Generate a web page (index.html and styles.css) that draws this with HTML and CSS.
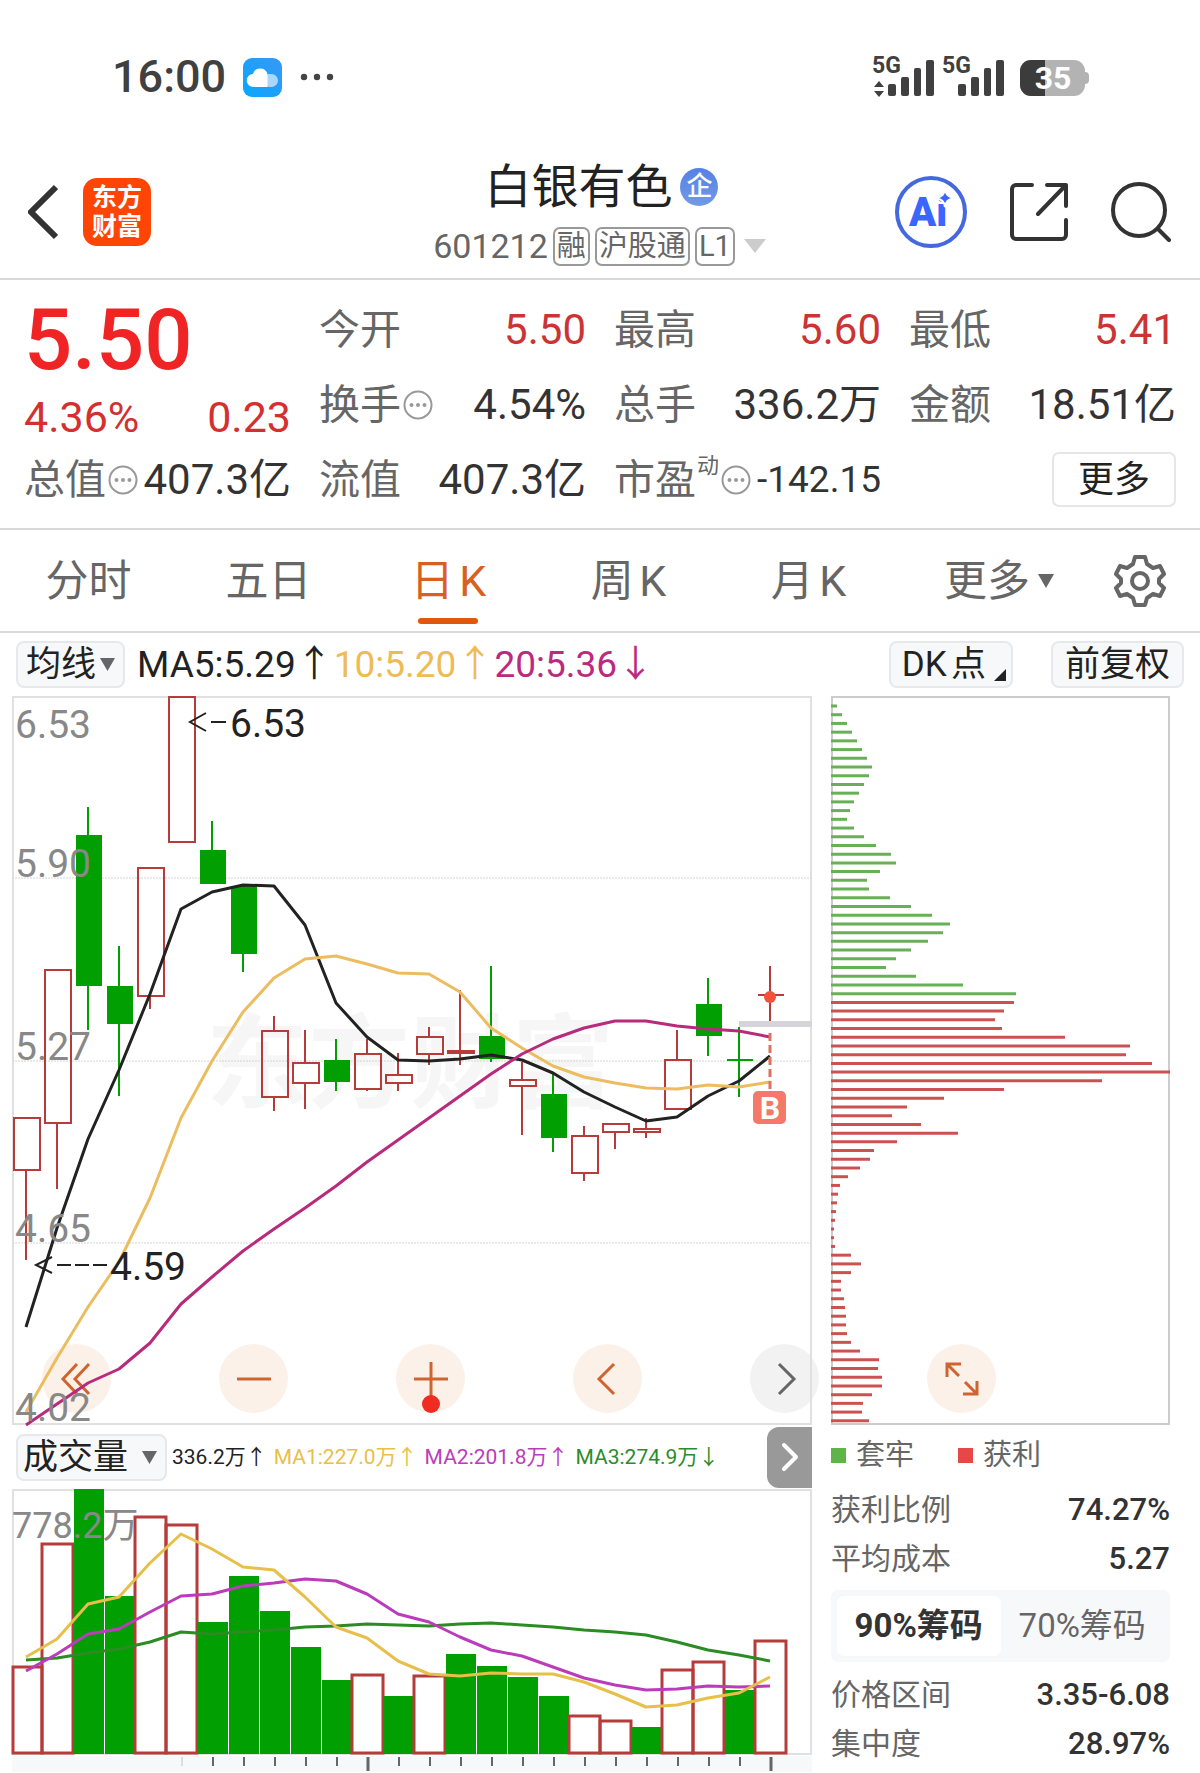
FILE: index.html
```html
<!DOCTYPE html>
<html lang="zh-CN">
<head>
<meta charset="utf-8">
<meta name="viewport" content="width=device-width, initial-scale=1">
<title>白银有色 601212</title>
<link rel="stylesheet" href="styles.css">
</head>
<body>
<div class="status">
  <div class="status-left">
    <span class="clock">16:00</span>
    <svg class="cloud" viewBox="0 0 39 39" aria-hidden="true">
      <defs>
        <linearGradient id="sky" x1="0" y1="1" x2="1" y2="0"><stop offset="0" stop-color="#06a8ff"/><stop offset="1" stop-color="#3a97f5"/></linearGradient>
      </defs>
      <rect width="39" height="39" rx="9" fill="url(#sky)"/>
      <rect x="20" y="16" width="15" height="13" rx="6.5" fill="#a9d8fb"/>
      <path d="M10.500 29a6.500 6.500 0 0 1-.5-13 7.500 7.500 0 0 1 14.500 0V29z" fill="#fff"/>
    </svg>
    <svg class="dots" viewBox="0 0 34 8" aria-hidden="true"><g fill="#444"><circle cx="4" cy="4" r="3.200"/><circle cx="17" cy="4" r="3.200"/><circle cx="30" cy="4" r="3.200"/></g></svg>
  </div>
  <svg class="signals" viewBox="-4 -7 222 56" role="img" aria-label="5G 5G 35">
    <g fill="#404040">
      <text x="0" y="17" class="sig-text">5G</text>
      <path d="M7 25l5 6H2zM7 41l5-6H2z"/>
      <rect x="16" y="28" width="8" height="12" rx="2"/><rect x="29" y="21" width="8" height="19" rx="2"/><rect x="42" y="12" width="7" height="28" rx="2"/><rect x="54" y="4" width="8" height="36" rx="2"/>
      <text x="70" y="17" class="sig-text">5G</text>
      <rect x="86" y="28" width="8" height="12" rx="2"/><rect x="99" y="21" width="8" height="19" rx="2"/><rect x="112" y="12" width="7" height="28" rx="2"/><rect x="124" y="4" width="8" height="36" rx="2"/>
    </g>
    <rect x="148" y="4" width="65" height="36" rx="11" fill="#b3b3b3"/>
    <path d="M212 16h1a4 4 0 0 1 4 4v4a4 4 0 0 1-4 4h-1z" fill="#b3b3b3"/>
    <path d="M173 4h-14a11 11 0 0 0-11 11v14a11 11 0 0 0 11 11h14z" fill="#3c3c3c"/>
    <text x="181" y="33" text-anchor="middle" class="batt-text">35</text>
  </svg>
</div>

<header class="top">
  <div class="top-side">
    <button class="plain" aria-label="返回"><svg width="30" height="56" viewBox="0 0 30 56"><path d="M28 3L3 28l25 25" fill="none" stroke="#333" stroke-width="6"/></svg></button>
    <a class="logo" href="#">东方<br>财富</a>
  </div>
  <div class="title">
    <h1>白银有色<span class="badge">企</span></h1>
    <div class="sub"><span class="code">601212</span><span class="tag">融</span><span class="tag">沪股通</span><span class="tag">L1</span><svg class="sub-caret" width="22" height="14" viewBox="0 0 22 14"><path d="M0 0h22L11 14z" fill="#ccc"/></svg></div>
  </div>
  <div class="top-side top-actions">
    <button class="plain" aria-label="Ai"><svg width="72" height="72" viewBox="0 0 72 72">
      <circle cx="36" cy="36" r="34" fill="#fff" stroke="#4468dd" stroke-width="4"/>
      <text x="14" y="50" class="ai-text">Ai</text>
      <path d="M50 13c1 6 3 7 8 9-5 2-7 3-8 9-1-6-3-7-8-9 5-2 7-3 8-9z" fill="#3a66ff" stroke="#fff" stroke-width="2"/>
    </svg></button>
    <button class="plain" aria-label="分享"><svg width="58" height="58" viewBox="0 0 58 58"><g fill="none" stroke="#333" stroke-width="4" stroke-linecap="round" stroke-linejoin="round"><path d="M22 2H6a4 4 0 0 0-4 4v46a4 4 0 0 0 4 4h46a4 4 0 0 0 4-4V37M37 2h19v21M55 3L28 31"/></g></svg></button>
    <button class="plain" aria-label="搜索"><svg width="60" height="60" viewBox="0 0 60 60"><g fill="none" stroke="#333" stroke-width="4" stroke-linecap="round"><circle cx="28" cy="28" r="26"/><path d="M47 47l11 11"/></g></svg></button>
  </div>
</header>

<section class="quote">
  <div class="price">
    <strong>5.50</strong>
    <div class="change"><span>4.36%</span><span>0.23</span></div>
  </div>
  <div class="cell"><span class="k">今开</span><span class="v up">5.50</span></div>
  <div class="cell"><span class="k">最高</span><span class="v up">5.60</span></div>
  <div class="cell"><span class="k">最低</span><span class="v up">5.41</span></div>
  <div class="cell"><span class="k">换手<svg class="info" viewBox="0 0 30 30"><use href="#more-info"/></svg></span><span class="v">4.54%</span></div>
  <div class="cell"><span class="k">总手</span><span class="v">336.2万</span></div>
  <div class="cell"><span class="k">金额</span><span class="v">18.51亿</span></div>
  <div class="cell"><span class="k">总值<svg class="info" viewBox="0 0 30 30"><use href="#more-info"/></svg></span><span class="v">407.3亿</span></div>
  <div class="cell"><span class="k">流值</span><span class="v">407.3亿</span></div>
  <div class="cell"><span class="k">市盈<sup>动</sup><svg class="info" viewBox="0 0 30 30"><use href="#more-info"/></svg></span><span class="v small">-142.15</span></div>
  <div class="cell end"><button class="more">更多</button></div>
</section>

<nav class="tabs">
  <a href="#">分时</a>
  <a href="#">五日</a>
  <a href="#" class="on">日K</a>
  <a href="#">周K</a>
  <a href="#">月K</a>
  <a href="#" class="wide">更多<svg class="tab-caret" width="16" height="14" viewBox="0 0 16 14"><path d="M0 0h16L8 14z" fill="#666"/></svg></a>
  <button class="plain gear" aria-label="设置"><svg width="52" height="52" viewBox="0 0 52 52"><g fill="none" stroke="#666" stroke-width="4" stroke-linejoin="round"><path d="M21 2h10l2 7 6 4 7-2 4 8-5 5v4l5 5-4 8-7-2-6 4-2 7H21l-2-7-6-4-7 2-4-8 5-5v-4l-5-5 4-8 7 2 6-4z"/><circle cx="26" cy="26" r="8"/></g></svg></button>
</nav>

<div class="ma-row">
  <button class="chip">均线<svg width="15" height="13" viewBox="0 0 15 13"><path d="M0 0h15L7.500 13z" fill="#666"/></svg></button>
  <span class="ma black">MA5:5.29↑</span><span class="ma gold">10:5.20↑</span><span class="ma pink">20:5.36↓</span>
  <button class="chip dk">DK点<svg class="corner" width="12" height="12" viewBox="0 0 12 12"><path d="M12 0v12H0z" fill="#222"/></svg></button>
  <button class="chip fq">前复权</button>
</div>

<main class="board">
  <div class="left">
    <div class="kline">
      <svg id="kline" viewBox="0 0 800 729" role="img" aria-label="日K线"></svg>
      <div class="tools">
        <button class="round" aria-label="最早"><svg viewBox="0 0 36 36"><path d="M18 3L4 18l14 15M30 3L16 18l14 15"/></svg></button>
        <button class="round" aria-label="缩小"><svg viewBox="0 0 36 36"><path d="M1 18h34"/></svg></button>
        <button class="round" aria-label="放大"><svg viewBox="0 0 36 36"><path d="M1 18h34M18 1v34"/></svg><span class="dot"></span></button>
        <button class="round" aria-label="向左"><svg viewBox="0 0 36 36"><path d="M24 3L9 18l15 15"/></svg></button>
        <button class="round grey" aria-label="向右"><svg viewBox="0 0 36 36"><path d="M12 3l15 15-15 15"/></svg></button>
      </div>
    </div>
    <div class="vol-row">
      <button class="chip vol-chip">成交量<svg width="15" height="13" viewBox="0 0 15 13"><path d="M0 0h15L7.500 13z" fill="#666"/></svg></button>
      <span class="vm black">336.2万↑</span><span class="vm gold2">MA1:227.0万↑</span><span class="vm violet">MA2:201.8万↑</span><span class="vm green">MA3:274.9万↓</span>
      <button class="next" aria-label="展开"><svg width="18" height="30" viewBox="0 0 18 30"><path d="M3 3l12 12L3 27" fill="none" stroke="#fff" stroke-width="4" stroke-linecap="round" stroke-linejoin="round"/></svg></button>
    </div>
    <svg id="volume" class="volume" viewBox="0 0 800 283" role="img" aria-label="成交量"></svg>
  </div>
  <aside class="right">
    <div class="chips">
      <svg id="chips" viewBox="0 0 339 729" role="img" aria-label="筹码分布"></svg>
      <button class="round expand" aria-label="全屏"><svg viewBox="0 0 36 36"><path d="M3 16V3h14M4 4l11 11M33 20v13H19M32 32L21 21"/></svg></button>
    </div>
    <div class="legend"><i class="sq g"></i><span>套牢</span><i class="sq r"></i><span>获利</span></div>
    <div class="stat"><span>获利比例</span><b>74.27%</b></div>
    <div class="stat"><span>平均成本</span><b>5.27</b></div>
    <div class="seg"><button class="on">90%筹码</button><button>70%筹码</button></div>
    <div class="stat"><span>价格区间</span><b>3.35-6.08</b></div>
    <div class="stat"><span>集中度</span><b>28.97%</b></div>
  </aside>
</main>

<svg width="0" height="0" class="defs" aria-hidden="true"><symbol id="more-info" viewBox="0 0 30 30"><circle cx="15" cy="15" r="13.500" fill="none" stroke="#999" stroke-width="2"/><g fill="#999"><circle cx="8.500" cy="15" r="2"/><circle cx="15" cy="15" r="2"/><circle cx="21.500" cy="15" r="2"/></g></symbol></svg>
<script src="charts.js"></script>
</body>
</html>
```
FILE: styles.css
```css
* { box-sizing: border-box; }
body {
  margin: 0;
  background: #fff;
  color: #222;
  font-family: Roboto, "Noto Sans CJK SC", sans-serif;
}
button { font-family: inherit; color: inherit; margin: 0; cursor: pointer; }
a { color: inherit; text-decoration: none; }
svg { display: block; }
.defs { position: absolute; }
.plain { border: 0; background: none; padding: 0; }

.status {
  display: flex;
  justify-content: space-between;
  align-items: center;
  padding: 49px 110px 39px 112px;
}
.status-left { display: flex; align-items: center; }
.clock { font-size: 45px; line-height: 46px; font-weight: 500; color: #404040; }
.cloud { width: 39px; height: 39px; margin-left: 17px; }
.dots { width: 34px; height: 8px; margin-left: 18px; }
.signals { width: 222px; height: 56px; }
.sig-text { font-size: 23px; font-weight: 700; }
.batt-text { font-size: 32px; font-weight: 700; fill: #fff; }

.top {
  display: grid;
  grid-template-columns: 1fr auto 1fr;
  align-items: center;
  padding: 13px 29px 12px 28px;
  border-bottom: 2px solid #d9d9d9;
}
.top-side { display: flex; align-items: center; gap: 25px; }
.top-actions { justify-content: flex-end; gap: 43px; }
.logo {
  width: 68px; height: 68px;
  border-radius: 14px;
  background: #ff4506;
  color: #fff;
  font-size: 25px; line-height: 29px; font-weight: 700;
  text-align: center;
  padding-top: 5px;
}
.ai-text { font-size: 40px; font-weight: 900; fill: #3a66ff; }
.title { display: flex; flex-direction: column; align-items: center; gap: 9px; }
.title h1 {
  margin: 0;
  display: flex; align-items: center; gap: 8px;
  padding-left: 4px;
  font-size: 47px; line-height: 60px; font-weight: 400;
}
.badge {
  width: 38px; height: 38px;
  border-radius: 50%;
  background: linear-gradient(#5580e6, #7399e6);
  color: #fff;
  font-size: 26px; line-height: 36px; font-weight: 500;
  text-align: center;
}
.sub { display: flex; align-items: center; gap: 5px; color: #666; }
.code { font-size: 34px; line-height: 40px; }
.tag {
  border: 2px solid #999; border-radius: 7px;
  padding: 0 2px;
  font-size: 29px; line-height: 35px;
}
.sub-caret { margin-left: 4px; }

.quote {
  display: grid;
  grid-template-columns: repeat(4, 1fr);
  grid-auto-rows: 75px;
  column-gap: 28px;
  padding: 12px 24px 11px 24px;
  border-bottom: 2px solid #d9d9d9;
}
.price { grid-row: span 2; color: #f02424; }
.price strong { display: block; font-size: 85px; line-height: 96px; font-weight: 500; }
.change { display: flex; justify-content: space-between; font-size: 43px; line-height: 58px; color: #d43030; }
.cell { display: flex; justify-content: space-between; align-items: center; white-space: nowrap; }
.k { display: flex; align-items: center; font-size: 41px; line-height: 50px; color: #666; }
.k sup { font-size: 22px; line-height: 22px; margin-left: 1px; align-self: flex-start; }
.info { width: 30px; height: 30px; margin-left: 2px; }
.v { font-size: 42px; line-height: 50px; color: #333; }
.v.small { font-size: 37px; }
.v.up { color: #cc3434; }
.cell.end { justify-content: flex-end; }
.more {
  width: 124px; height: 55px;
  border: 2px solid #e6e6e6; border-radius: 7px;
  background: #fff;
  padding: 0;
  font-size: 36px; line-height: 48px;
}

.tabs { display: flex; height: 103px; border-bottom: 2px solid #d9d9d9; }
.tabs a {
  position: relative;
  flex: 0 0 15%;
  display: flex; align-items: center; justify-content: center;
  padding-right: 3px;
  font-size: 43px; line-height: 50px;
  color: #666;
  text-autospace: normal;
}
.tabs .wide { padding: 0 0 0 18px; }
.tabs .on { color: #d9601f; }
.tabs .on::after {
  content: "";
  position: absolute; bottom: 7px; left: 50%;
  width: 60px; height: 6px; margin-left: -32px;
  border-radius: 3px;
  background: #e2570f;
}
.tab-caret { margin-left: 8px; }
.gear { flex: 1; display: flex; align-items: center; justify-content: center; }

.ma-row { display: flex; align-items: center; height: 63px; padding: 0 16px; }
.chip {
  display: flex; align-items: center; gap: 4px;
  flex: none;
  height: 47px;
  border: 2px solid #e6e8ec; border-radius: 8px;
  background: #f7f8fa;
  padding: 0 8px;
  font-size: 35px; line-height: 43px;
  white-space: nowrap;
}
.ma-row .chip + .ma { margin-left: 12px; }
.ma { font-size: 37px; line-height: 46px; margin-right: 1px; white-space: nowrap; }
.dk { position: relative; margin-left: auto; margin-right: 38px; padding: 0 25px 0 11px; text-autospace: normal; }
.fq { padding: 0 12px; }
.corner { position: absolute; right: 5px; bottom: 5px; }
.black { color: #222; }
.gold { color: #eebb55; }
.pink { color: #bb2a80; }

.board {
  display: grid;
  grid-template-columns: 800fr 339fr;
  column-gap: 19px;
  padding: 0 30px 0 12px;
}
.left, .right { min-width: 0; }
.kline, .chips { position: relative; }
.kline > svg, .chips > svg, .volume { width: 100%; height: auto; overflow: visible; }
.kline > svg { position: relative; z-index: 1; pointer-events: none; }
.tools {
  position: absolute; left: 30px; right: -7px; bottom: 12px;
  display: flex; justify-content: space-between;
}
.round {
  position: relative;
  width: 69px; height: 69px;
  border: 0; border-radius: 50%;
  background: #fcf1e9;
  display: flex; align-items: center; justify-content: center;
  padding: 0;
}
.round svg { width: 36px; height: 36px; fill: none; stroke: #cf6430; stroke-width: 3; }
.round.grey { background: #f2f2f2; }
.round.grey svg { stroke: #666; }
.dot { position: absolute; left: 26px; bottom: 0; width: 18px; height: 18px; border-radius: 50%; background: #f02b22; }
.expand { position: absolute; left: 96px; bottom: 12px; }

.axis-text { font-size: 39px; fill: #888; }
.axis-text.volume-max { font-size: 36px; }
.mark-text { font-size: 39px; fill: #222; }
.watermark { font-size: 102px; font-weight: 700; fill: #f6f6f6; }
.b-text { font-size: 32px; font-weight: 700; fill: #fff; }

.vol-row { display: flex; align-items: center; height: 64px; padding-left: 4px; white-space: nowrap; }
.vol-chip { width: 151px; justify-content: space-between; padding: 0 8px 0 5px; margin-right: 5px; }
.vm { font-size: 21px; line-height: 46px; margin-right: 7px; }
.gold2 { color: #e8c048; }
.violet { color: #bb3cbb; }
.green { color: #2a8c2a; }
.next {
  flex: none;
  margin-left: auto;
  width: 45px; height: 61px;
  border: 0; border-radius: 12px 0 0 12px;
  background: #999;
  display: flex; align-items: center; justify-content: center;
  padding: 0;
}

.legend { display: flex; align-items: center; height: 60px; font-size: 29px; line-height: 40px; color: #666; }
.sq { width: 15px; height: 15px; margin-right: 10px; }
.sq.g { background: #5cb544; }
.sq.r { background: #e64747; margin-left: 44px; }
.stat { display: flex; justify-content: space-between; align-items: center; height: 49px; font-size: 30px; line-height: 40px; color: #666; }
.stat b { font-size: 31px; font-weight: 500; color: #333; }
.seg { display: flex; height: 72px; margin: 7px 0 8px; padding: 6px; border-radius: 7px; background: #f7f8fa; }
.seg button { flex: 1; border: 0; border-radius: 7px; background: none; padding: 0; font-size: 33px; line-height: 44px; color: #666; white-space: nowrap; }
.seg .on { background: #fff; color: #333; font-weight: 700; }
```
FILE: charts.js
```js
const NS = "http://www.w3.org/2000/svg";
const PITCH = 31;
const RED = "#b53c3a";
const GREEN = "#029f02";
const mid = i => 14 + PITCH * i;

function add(svg, tag, attrs, text) {
  const el = document.createElementNS(NS, tag);
  for (const k in attrs) el.setAttribute(k, attrs[k]);
  if (text) el.textContent = text;
  svg.appendChild(el);
  return el;
}
function line(svg, x1, y1, x2, y2, stroke, width, extra) {
  add(svg, "line", Object.assign({ x1, y1, x2, y2, stroke, "stroke-width": width }, extra));
}
function curve(svg, ys, stroke) {
  add(svg, "polyline", { points: ys.map((y, i) => mid(i) + "," + y).join(" "), fill: "none", stroke, "stroke-width": 3, "stroke-linejoin": "round" });
}

// [rising, high, body top, body bottom, low]
const candles = [
  [1, 421, 421, 474, 564], [1, 273, 273, 427, 493], [0, 111, 139, 290, 334], [0, 250, 290, 328, 400],
  [1, 171, 171, 300, 313], [1, 0, 0, 146, 146], [0, 125, 154, 188, 188], [0, 190, 190, 258, 276],
  [1, 320, 334, 401, 415], [1, 334, 366, 387, 413], [0, 343, 364, 386, 395], [1, 343, 357, 393, 395],
  [1, 357, 378, 387, 395], [1, 331, 340, 358, 369], [1, 294, 354, 357, 369], [0, 270, 340, 363, 366],
  [1, 366, 383, 390, 439], [0, 378, 398, 442, 456], [1, 430, 439, 477, 485], [1, 427, 427, 436, 453],
  [1, 422, 432, 436, 442], [1, 334, 363, 413, 413], [0, 282, 308, 340, 360], [0, 331, 364, 364, 401],
  [1, 270, 299, 299, 325]
];

const k = document.getElementById("kline");
add(k, "rect", { x: 1, y: 1, width: 798, height: 727, fill: "none", stroke: "#e0e0e0", "stroke-width": 2 });
add(k, "text", { x: 194, y: 404, class: "watermark" }, "东方财富");
[182, 365, 547].forEach(y => line(k, 0, y, 800, y, "#d4d4d4", 1, { "stroke-dasharray": "2 1" }));
candles.forEach(([rise, hi, top, bot, lo], i) => {
  const x = mid(i), c = rise ? RED : GREEN;
  if (hi < top) line(k, x, hi, x, top, c, 2);
  if (lo > bot) line(k, x, bot, x, lo, c, 2);
  if (top === bot) line(k, x - 12, top, x + 14, top, c, 2);
  else if (rise) add(k, "rect", { x: x - 12, y: top + 1, width: 26, height: bot - top - 1, fill: "none", stroke: c, "stroke-width": 2 });
  else add(k, "rect", { x: x - 12, y: top, width: 26, height: bot - top, fill: c });
});
line(k, 727, 328, 800, 328, "#d4d4da", 6);
curve(k, [631, 532, 443, 374, 298, 213, 196, 189, 190, 229, 307, 341, 364, 365, 363, 359, 364, 377, 396, 411, 425, 421, 400, 385, 360], "#222");
curve(k, [716, 662, 611, 566, 502, 422, 365, 316, 282, 263, 260, 268, 277, 278, 296, 332, 352, 370, 381, 387, 392, 393, 389, 391, 386], "#ecbd60");
curve(k, [729, 708, 687, 673, 647, 608, 581, 555, 533, 512, 490, 466, 444, 422, 400, 378, 358, 343, 332, 325, 325, 330, 333, 335, 341], "#b82a7c");
add(k, "circle", { cx: 758, cy: 301, r: 6, fill: "#f4513c" });
line(k, 758, 337, 758, 393, "#e2705f", 3, { "stroke-dasharray": "8 4" });
add(k, "rect", { x: 741, y: 395, width: 33, height: 33, rx: 5, fill: "#f4796b" });
add(k, "text", { x: 758, y: 423, "text-anchor": "middle", class: "b-text" }, "B");
[["6.53", 42], ["5.90", 181], ["5.27", 364], ["4.65", 546], ["4.02", 725]].forEach(([t, y]) =>
  add(k, "text", { x: 3, y, class: "axis-text" }, t));
add(k, "text", { x: 218, y: 41, class: "mark-text" }, "6.53");
add(k, "text", { x: 98, y: 584, class: "mark-text" }, "4.59");
add(k, "path", { d: "M194 17l-16 9 16 9M199 26h15M40 561l-16 8 16 8M45 569h14M63 569h14M81 569h14", fill: "none", stroke: "#222", "stroke-width": 2 });

// [rising, top of the bar]
const volumes = [[1, 177], [1, 54], [0, 0], [0, 107], [1, 27], [1, 35], [0, 133], [0, 87], [0, 122], [0, 158], [0, 191], [1, 185], [0, 207],
  [1, 186], [0, 165], [0, 177], [0, 188], [0, 207], [1, 226], [1, 231], [0, 238], [1, 180], [1, 172], [0, 201], [1, 151]];
const v = document.getElementById("volume");
add(v, "rect", { x: 1, y: 1, width: 798, height: 264, fill: "#fff", stroke: "#e0e0e0", "stroke-width": 2 });
add(v, "rect", { x: 0, y: 267, width: 800, height: 16, fill: "#f7f8fa" });
volumes.forEach(([rise, top], i) => {
  const x = PITCH * i;
  if (rise) add(v, "rect", { x: Math.max(x - 1, 1), y: top + 1, width: i ? 31 : 29, height: 263 - top, fill: "none", stroke: RED, "stroke-width": 3 });
  else add(v, "rect", { x, y: top, width: 30, height: 265 - top, fill: GREEN });
});
curve(v, [171, 169, 164, 160, 153, 143, 145, 143, 141, 138, 137, 135, 136, 137, 135, 134, 136, 138, 141, 143, 146, 153, 161, 166, 172], "#2a8c22");
curve(v, [182, 165, 145, 140, 123, 107, 105, 97, 94, 90, 92, 105, 125, 133, 148, 161, 167, 178, 189, 196, 201, 200, 197, 198, 197], "#bb3cbb");
curve(v, [168, 150, 115, 108, 74, 45, 60, 78, 81, 108, 138, 149, 172, 185, 187, 184, 185, 185, 193, 205, 218, 216, 209, 204, 188], "#e6c04a");
add(v, "text", { x: 0, y: 49, class: "axis-text volume-max" }, "778.2万");
for (let i = 5; i < 25; i++) {
  const major = i === 11 || i === 24;
  line(v, mid(i) + 1, 268, mid(i) + 1, major ? 282 : 277, i === 5 ? "#ddd" : "#666", major ? 3 : 2);
}

// Chip distribution, from the highest price to the lowest
const held = [6, 11, 16, 21, 26, 31, 36, 41, 38, 33, 28, 23, 19, 16, 23, 33, 45, 60, 65, 49, 36, 38, 59, 80, 101, 119, 112, 97, 80, 65, 55, 85, 132, 185];
const gain = [183, 173, 164, 171, 234, 299, 295, 321, 339, 271, 173, 113, 76, 61, 90, 127, 66, 43, 39, 29, 17, 9, 7, 6, 5, 4, 3, 3, 4, 20, 30, 20, 10, 10, 13, 14, 15, 15, 16, 20, 29, 48, 47, 51, 51, 41, 32, 31, 38];
const c = document.getElementById("chips");
add(c, "rect", { x: 1, y: 1, width: 337, height: 727, fill: "#fff", stroke: "#ccc", "stroke-width": 2 });
held.concat(gain).forEach((w, i) => {
  const y = 10 + i * 8.717;
  line(c, 0, y, w, y, i < held.length ? "#68b055" : "#cc5252", 3);
});
```
